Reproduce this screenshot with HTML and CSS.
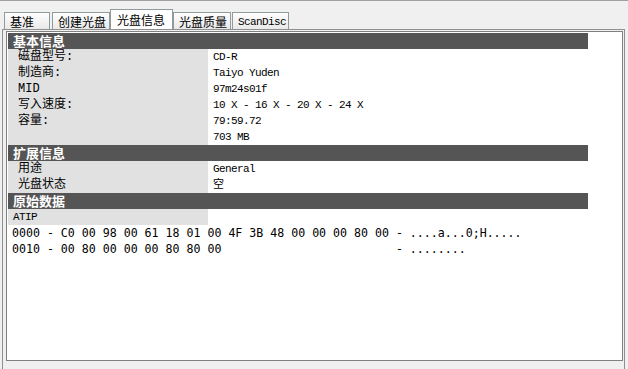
FILE: index.html
```html
<!DOCTYPE html>
<html lang="zh-CN">
<head>
    <meta charset="UTF-8">
    <title>光盘信息</title>
    <link rel="stylesheet" href="styles.css">
</head>
<body>

    <!-- Tab strip -->
    <div class="tabs">
        <div class="tab tab-base">基准</div>
        <div class="tab tab-burn">创建光盘</div>
        <div class="tab active">光盘信息</div>
        <div class="tab tab-quality">光盘质量</div>
        <div class="tab tab-latin">ScanDisc</div>
    </div>

    <div class="page">
        <div class="list">

            <div class="section">基本信息</div>
            <div class="row"><span class="label">磁盘型号:</span><span class="value">CD-R</span></div>
            <div class="row"><span class="label">制造商:</span><span class="value">Taiyo Yuden</span></div>
            <div class="row"><span class="label">MID</span><span class="value">97m24s01f</span></div>
            <div class="row"><span class="label">写入速度:</span><span class="value">10 X - 16 X - 20 X - 24 X</span></div>
            <div class="row"><span class="label">容量:</span><span class="value">79:59.72</span></div>
            <div class="row"><span class="label"></span><span class="value">703 MB</span></div>

            <div class="section">扩展信息</div>
            <div class="row"><span class="label">用途</span><span class="value">General</span></div>
            <div class="row"><span class="label">光盘状态</span><span class="value">空</span></div>

            <div class="section">原始数据</div>
            <div class="row"><span class="label label-raw">ATIP</span><span class="value"></span></div>
            <div class="hex">0000 - C0 00 98 00 61 18 01 00 4F 3B 48 00 00 00 80 00 - ....a...0;H.....</div>
            <div class="hex">0010 - 00 80 00 00 00 80 80 00                         - ........</div>

        </div>
    </div>

</body>
</html>
```

FILE: styles.css
```css
/* Window */
body {
    margin: 0;
    height: 368px;
    overflow: hidden;
    background: #f0f0f0;
    border-top: 1px solid #a0a0a0;
    font-family: "Noto Sans CJK SC", sans-serif;
    font-size: 12px;
    color: #000;
}

/* Tabs */
.tabs {
    display: flex;
    align-items: flex-end;
    height: 20px;
    margin-top: 8px;
    padding-left: 4px;
}

.tab {
    height: 17px;
    line-height: 18px;
    padding: 0 5px;
    border: 1px solid #919b9c;
    border-bottom: none;
    background: linear-gradient(#fefefe, #e9e9e9);
    box-sizing: border-box;
    white-space: nowrap;
}

.tab-base {
    width: 46px;
    margin-right: 2px;
}

.tab-burn {
    width: 58px;
}

.tab-quality {
    width: 58px;
    margin-right: 1px;
}

.tab-latin {
    width: 57px;
    font-family: "Liberation Mono", monospace;
    font-size: 11px;
    letter-spacing: -0.6px;
}

.tab.active {
    width: 63px;
    height: 20px;
    line-height: 19px;
    padding: 0 6px;
    background: #fff;
}

/* Tab page */
.page {
    margin: 0 3px 0 2px;
    padding: 1px 1px 0 3px;
    border: 1px solid #8f8f8f;
    border-bottom: none;
    height: 338px;
}

/* Property list */
.list {
    padding: 1px 0 0 1px;
    box-sizing: border-box;
    height: 330px;
    border: 1px solid #808080;
    background: #fff;
}

.section {
    width: 580px;
    height: 16px;
    line-height: 16px;
    padding-left: 5px;
    box-sizing: border-box;
    background: #555;
    color: #fff;
    font-weight: bold;
    font-size: 13px;
}

.row {
    display: flex;
    width: 580px;
    height: 16px;
    line-height: 16px;
}

.label {
    width: 200px;
    padding-left: 10px;
    box-sizing: border-box;
    overflow: hidden;
    line-height: 17px;
    background: #e1e1e1;
    font-family: "Liberation Mono", "Noto Sans CJK SC", monospace;
}

.label-raw {
    padding-left: 5px;
    font-size: 11px;
    letter-spacing: -0.6px;
}

.value {
    flex: 1;
    padding-left: 5px;
    font-family: "Liberation Mono", "Noto Sans CJK SC", monospace;
    font-size: 11px;
    letter-spacing: -0.6px;
}

/* Raw hex dump */
.hex {
    height: 16px;
    line-height: 17px;
    padding-left: 4px;
    white-space: pre;
    font-family: "DejaVu Sans Mono", monospace;
    font-size: 11.6px;
}
```
